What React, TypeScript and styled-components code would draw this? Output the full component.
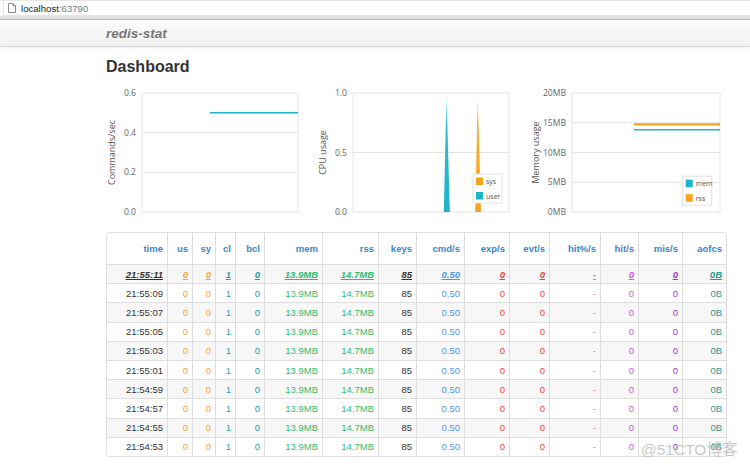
import React from 'react';
import styled, { createGlobalStyle } from 'styled-components';

const GlobalStyle = createGlobalStyle`
  html, body { margin: 0; padding: 0; background: #fff; }
  body {
    font-family: "Liberation Sans", Arial, Helvetica, sans-serif;
    color: #333;
    width: 750px;
    height: 467px;
    overflow: hidden;
  }
`;

const Page = styled.div`
  position: relative;
  width: 750px;
  height: 467px;
  overflow: hidden;
`;

const AddressBar = styled.div`
  height: 16px;
  box-sizing: border-box;
  border-top: 1px solid #e8e8e8;
  padding-left: 3px;
  background: #fff;
  display: flex;
`;

const UrlField = styled.div`
  flex: 1;
  display: flex;
  align-items: center;
  gap: 5px;
  padding-left: 4px;
  border-left: 1px solid #e6e6e6;
  border-bottom: 1px solid #e6e6e6;
  border-bottom-left-radius: 2px;
`;

const Url = styled.span`
  font-size: 9.6px;
  color: #222;
`;

const Port = styled.span`
  color: #777;
`;

const ChromeEdge = styled.div`
  height: 4px;
  background: linear-gradient(#e1e1e1 0, #e1e1e1 3px, #bcbcbc 3px);
`;

const NavBar = styled.div`
  height: 27px;
  box-sizing: border-box;
  background: linear-gradient(#fcfcfc, #f1f1f1);
  border-bottom: 1px solid #d9d9d9;
  box-shadow: 0 1px 3px rgba(0, 0, 0, 0.07);
  display: flex;
  align-items: center;
  padding-left: 106px;
`;

const Brand = styled.span`
  font-size: 13.5px;
  font-weight: bold;
  font-style: italic;
  color: #777;
`;

const Container = styled.main`
  width: 621px;
  margin-left: 106px;
`;

const Title = styled.h1`
  margin: 9.5px 0 0;
  font-size: 16px;
  line-height: 20px;
  font-weight: bold;
  color: #333;
`;

const ChartRow = styled.div`
  display: grid;
  grid-template-columns: repeat(3, 201px);
  column-gap: 10px;
  margin-top: 9.5px;
  height: 136px;
`;

const ChartSvg = styled.svg`
  display: block;
  overflow: visible;
  font-family: "Open Sans", "Liberation Sans", Arial, sans-serif;
`;

const Table = styled.table`
  width: 621px;
  table-layout: fixed;
  border-collapse: separate;
  border-spacing: 0;
  border: 1px solid #ddd;
  border-radius: 4px;
  margin-top: 10px;
  font-size: 9.5px;
`;

const Th = styled.th<{ $w: number }>`
  width: ${p => p.$w}px;
  height: 31px;
  box-sizing: border-box;
  padding: 0 4px;
  text-align: right;
  vertical-align: middle;
  color: #3a87c9;
  font-weight: bold;
  border-left: 1px solid #ddd;
  &:first-child { border-left: 0; }
`;

const Tr = styled.tr<{ $striped: boolean }>`
  background: ${p => (p.$striped ? '#f7f7f7' : '#fff')};
`;

const Td = styled.td<{ $color: string; $latest: boolean }>`
  height: 19.2px;
  box-sizing: border-box;
  padding: 0 4px;
  text-align: right;
  vertical-align: middle;
  color: ${p => p.$color};
  border-top: 1px solid #ddd;
  border-left: 1px solid #ddd;
  white-space: nowrap;
  font-weight: ${p => (p.$latest ? 'bold' : 'normal')};
  font-style: ${p => (p.$latest ? 'italic' : 'normal')};
  text-decoration: ${p => (p.$latest ? 'underline' : 'none')};
  &:first-child { border-left: 0; }
`;

const Watermark = styled.div`
  position: absolute;
  left: 641px;
  top: 437px;
  font-family: "Liberation Sans", "Noto Sans CJK SC", sans-serif;
  font-size: 15.5px;
  color: rgba(180, 180, 180, 0.75);
  white-space: nowrap;
`;

const CYAN = '#1cb4c8';
const ORANGE = '#f7a21c';

const W = 201;
const H = 136;
const TOP = 7;
const BOTTOM = 126;
const RIGHT = 192;

type ChartProps = {
  label: string;
  labelX: number;
  plotLeft: number;
  ticks: string[];
  children?: React.ReactNode;
};

function Chart({ label, labelX, plotLeft, ticks, children }: ChartProps) {
  const step = (BOTTOM - TOP) / (ticks.length - 1);
  return (
    <ChartSvg width={W} height={H} viewBox={`0 0 ${W} ${H}`}>
      {ticks.map((t, i) => {
        const y = TOP + i * step;
        return (
          <g key={t}>
            <line x1={plotLeft} x2={RIGHT} y1={y} y2={y} stroke="#e4e4e4" strokeWidth={1} />
            <text x={plotLeft - 6} y={y} fontSize={8.6} fill="#666" textAnchor="end" dominantBaseline="central">
              {t}
            </text>
          </g>
        );
      })}
      <line x1={plotLeft} x2={plotLeft} y1={TOP} y2={BOTTOM} stroke="#e4e4e4" />
      <line x1={RIGHT} x2={RIGHT} y1={TOP} y2={BOTTOM} stroke="#e4e4e4" />
      <text
        transform="rotate(-90)"
        x={-(TOP + BOTTOM) / 2}
        y={labelX}
        fontSize={9}
        fill="#555"
        textAnchor="middle"
      >
        {label}
      </text>
      {children}
    </ChartSvg>
  );
}

type LegendItem = { name: string; color: string };

function Legend({ x, y, items }: { x: number; y: number; items: LegendItem[] }) {
  return (
    <g>
      <rect x={x} y={y} width={29} height={29} fill="#fff" stroke="#e2e2e2" strokeWidth={1} />
      {items.map((it, i) => (
        <g key={it.name}>
          <rect x={x + 3} y={y + 3.5 + i * 14.5} width={7} height={7.5} fill={it.color} />
          <text x={x + 13} y={y + 7.5 + i * 14.5} fontSize={7} fill="#555" dominantBaseline="central">
            {it.name}
          </text>
        </g>
      ))}
    </g>
  );
}

type Col = { key: string; w: number; color: string };

const COLS: Col[] = [
  { key: 'time', w: 60, color: '#333' },
  { key: 'us', w: 25, color: '#f7a033' },
  { key: 'sy', w: 23, color: '#f7a033' },
  { key: 'cl', w: 20, color: '#2aa4ac' },
  { key: 'bcl', w: 29, color: '#1e9c9c' },
  { key: 'mem', w: 58, color: '#36bb6e' },
  { key: 'rss', w: 56, color: '#36bb6e' },
  { key: 'keys', w: 38, color: '#333' },
  { key: 'cmd/s', w: 48, color: '#4f97ee' },
  { key: 'exp/s', w: 45, color: '#ff3a3a' },
  { key: 'evt/s', w: 40, color: '#ff3a3a' },
  { key: 'hit%/s', w: 51, color: '#e070d4' },
  { key: 'hit/s', w: 38, color: '#cc55dd' },
  { key: 'mis/s', w: 44, color: '#a433d3' },
  { key: 'aofcs', w: 44, color: '#279a90' },
];

const TIMES = [
  '21:55:11',
  '21:55:09',
  '21:55:07',
  '21:55:05',
  '21:55:03',
  '21:55:01',
  '21:54:59',
  '21:54:57',
  '21:54:55',
  '21:54:53',
];

const rowValues = (time: string) => [
  time, '0', '0', '1', '0', '13.9MB', '14.7MB', '85', '0.50', '0', '0', '-', '0', '0', '0B',
];

function PageIcon() {
  return (
    <svg width="8" height="10" viewBox="0 0 8 10">
      <path d="M0.5 0.5 H5 L7.5 3 V9.5 H0.5 Z" fill="#fff" stroke="#8a8a8a" strokeWidth="1" />
      <path d="M5 0.5 V3 H7.5" fill="none" stroke="#8a8a8a" strokeWidth="1" />
    </svg>
  );
}

export default function App() {
  return (
    <Page>
      <GlobalStyle />
      <AddressBar>
        <UrlField>
          <PageIcon />
          <Url>
            localhost<Port>:63790</Port>
          </Url>
        </UrlField>
      </AddressBar>
      <ChromeEdge />
      <NavBar>
        <Brand>redis-stat</Brand>
      </NavBar>
      <Container>
        <Title>Dashboard</Title>
        <ChartRow>
          <Chart label="Commands/sec" labelX={9} plotLeft={36} ticks={['0.6', '0.4', '0.2', '0.0']}>
            <line x1={104} x2={RIGHT} y1={26.8} y2={26.8} stroke={CYAN} strokeWidth={1.6} />
          </Chart>
          <Chart label="CPU usage" labelX={9} plotLeft={36} ticks={['1.0', '0.5', '0.0']}>
            <defs>
              <linearGradient id="cyanFade" x1="0" y1="0" x2="0" y2="1">
                <stop offset="0" stopColor={CYAN} stopOpacity={0.15} />
                <stop offset="0.25" stopColor={CYAN} stopOpacity={0.9} />
                <stop offset="1" stopColor={CYAN} stopOpacity={1} />
              </linearGradient>
              <linearGradient id="orangeFade" x1="0" y1="0" x2="0" y2="1">
                <stop offset="0" stopColor={ORANGE} stopOpacity={0.15} />
                <stop offset="0.25" stopColor={ORANGE} stopOpacity={0.9} />
                <stop offset="1" stopColor={ORANGE} stopOpacity={1} />
              </linearGradient>
            </defs>
            <polygon points="129.5,7 126.8,126 132.8,126" fill="url(#cyanFade)" />
            <polygon points="160.7,8 158.3,126 164,126" fill="url(#orangeFade)" />
            <Legend
              x={156}
              y={88}
              items={[
                { name: 'sys', color: ORANGE },
                { name: 'user', color: CYAN },
              ]}
            />
          </Chart>
          <Chart label="Memory usage" labelX={10.5} plotLeft={44} ticks={['20MB', '15MB', '10MB', '5MB', '0MB']}>
            <line x1={106} x2={RIGHT} y1={38.4} y2={38.4} stroke={ORANGE} strokeWidth={2.2} />
            <line x1={106} x2={RIGHT} y1={43.7} y2={43.7} stroke={CYAN} strokeWidth={1.6} />
            <Legend
              x={154.7}
              y={90.2}
              items={[
                { name: 'mem', color: CYAN },
                { name: 'rss', color: ORANGE },
              ]}
            />
          </Chart>
        </ChartRow>
        <Table>
          <thead>
            <tr>
              {COLS.map(c => (
                <Th key={c.key} $w={c.w}>
                  {c.key}
                </Th>
              ))}
            </tr>
          </thead>
          <tbody>
            {TIMES.map((t, r) => (
              <Tr key={t} $striped={r % 2 === 0}>
                {rowValues(t).map((v, i) => (
                  <Td key={i} $color={COLS[i].color} $latest={r === 0}>
                    {v}
                  </Td>
                ))}
              </Tr>
            ))}
          </tbody>
        </Table>
      </Container>
      <Watermark>@51CTO博客</Watermark>
    </Page>
  );
}
